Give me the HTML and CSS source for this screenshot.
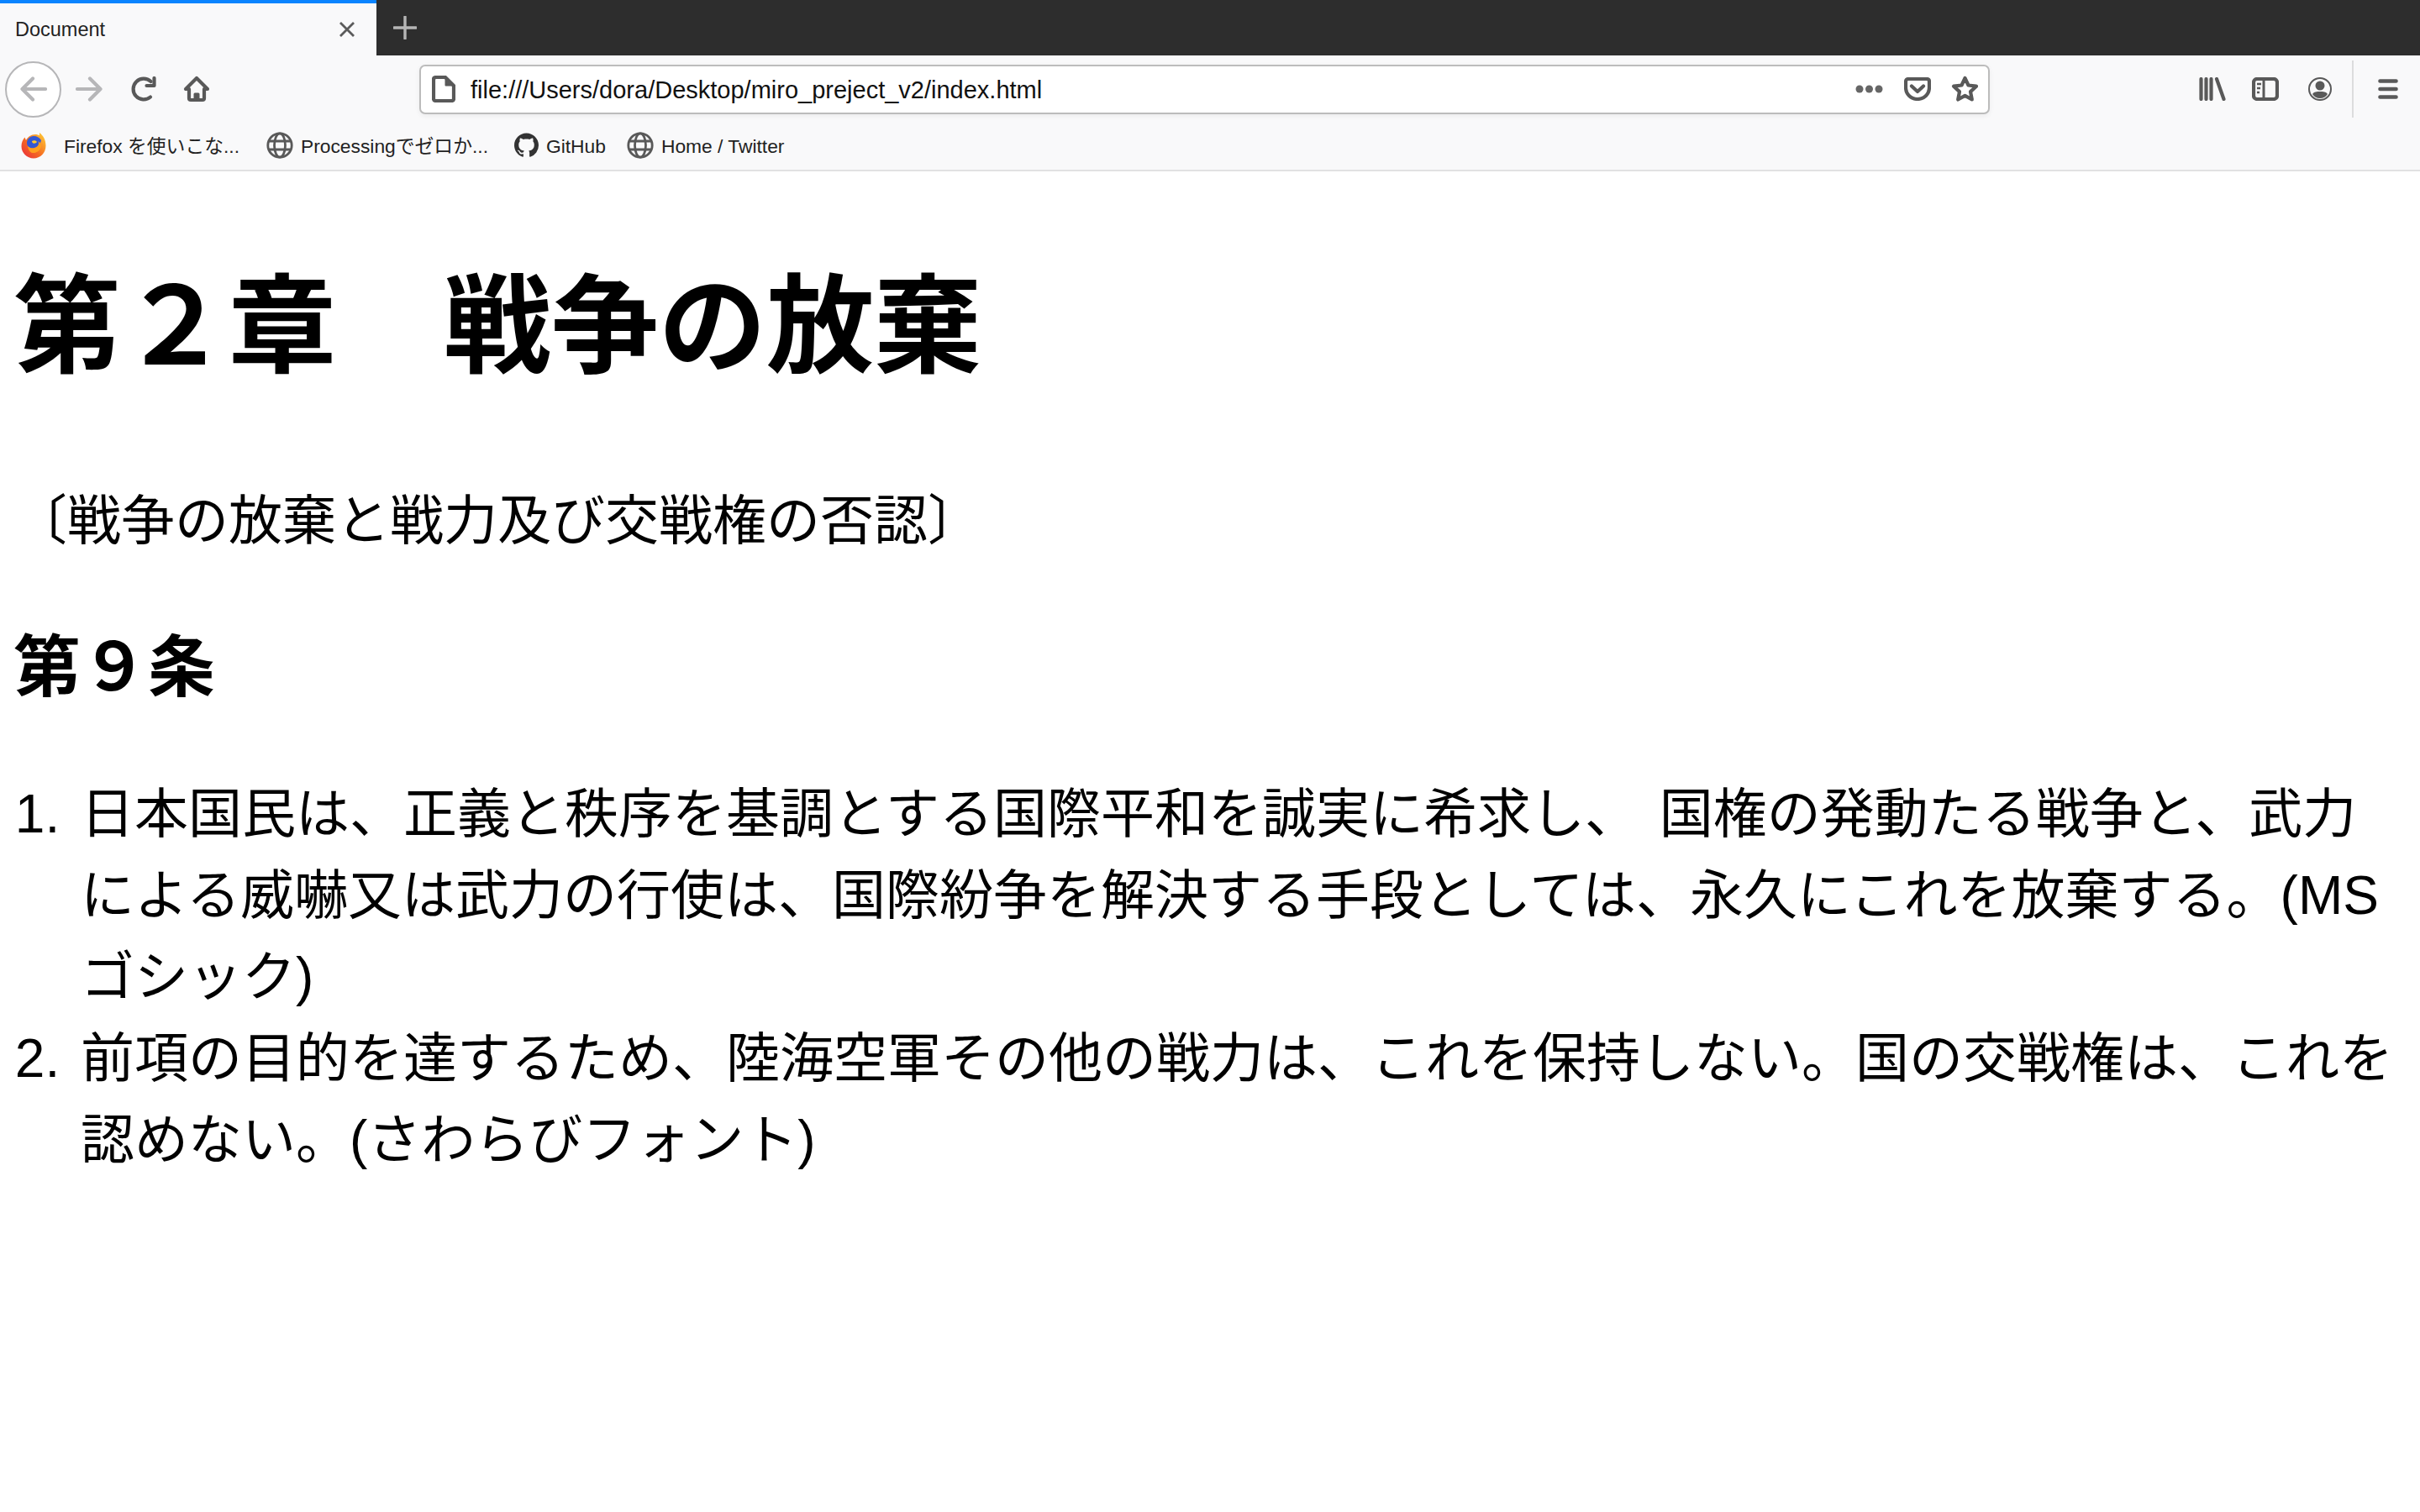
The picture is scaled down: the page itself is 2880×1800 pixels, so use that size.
FILE: index.html
```html
<!DOCTYPE html>
<html lang="ja">

<head>
    <meta charset="UTF-8">
    <title>Document</title>
    <link rel="stylesheet" href="styles.css">
</head>

<body>
<div class="tab-bar">
    <div class="tab">
        <span class="tab-title">Document</span>
        <svg class="tab-close" viewBox="0 0 20 20"><path d="M2 2l16 16M18 2L2 18"/></svg>
    </div>
    <svg class="new-tab" viewBox="0 0 28 28"><path d="M14 1v26M1 14h26"/></svg>
</div>

<div class="nav-bar">
    <div class="back-button">
        <svg class="icon-light" viewBox="0 0 32 32"><path d="M30 16H3M15 3.500L2.500 16 15 28.500"/></svg>
    </div>
    <svg class="forward-button icon-light" viewBox="0 0 32 32"><path d="M2 16h27M17 3.500L29.500 16 17 28.500"/></svg>
    <svg class="reload-button icon" viewBox="0 0 30 30"><path d="M23.500 6A12.400 12.400 0 1 0 23 24.500"/><path d="M27.500 2v9h-9"/></svg>
    <svg class="home-button icon" viewBox="0 0 32 32"><path d="M16 3L3 16h4v11c0 1.200.8 2 2 2h14c1.200 0 2-.8 2-2V16h4z"/><path class="door" d="M14 29v-7h4v7"/></svg>

    <div class="url-bar">
        <svg class="file-icon icon" viewBox="0 0 28 32"><path d="M5 2h11l10 10v15.500c0 1.500-1 2.500-2.500 2.500h-19C3 30 2 29 2 27.500v-23C2 3 3 2 5 2z"/><path class="icon-fill" d="M16 2v10h10z"/></svg>
        <span class="url-text">file:///Users/dora/Desktop/miro_preject_v2/index.html</span>
        <svg class="more-icon" viewBox="0 0 33 12"><circle cx="5" cy="6" r="4.500"/><circle cx="16.500" cy="6" r="4.500"/><circle cx="28" cy="6" r="4.500"/></svg>
        <svg class="pocket-icon icon" viewBox="0 0 32 28"><path d="M5 2h22c1.800 0 3 1.200 3 3v7c0 8-6 14-14 14S2 20 2 12V5c0-1.800 1.200-3 3-3z"/><path d="M9 10.500l7 6.500 7-6.500"/></svg>
        <svg class="star-icon icon" viewBox="0 0 33 32"><path d="M16.500 3l4 8.500 9.500 1.200-7 6.400 1.800 9.400-8.300-4.600-8.300 4.600L10 19.100l-7-6.400 9.500-1.200z"/></svg>
    </div>

    <svg class="library-icon icon" viewBox="0 0 32 28"><path d="M2.500 2v24M8.500 2v24M14.500 2v24M21 2l8.500 24"/></svg>
    <svg class="sidebar-icon icon" viewBox="0 0 32 28"><rect x="2" y="2" width="28" height="24" rx="4"/><path class="mid" d="M14 2v24"/><path class="thin" d="M6 8h5M6 13h4M6 18h3"/></svg>
    <svg class="profile-icon" viewBox="0 0 28 28"><circle class="ring" cx="14" cy="14" r="13"/><circle cx="14" cy="10" r="5.500"/><path d="M5 20c2-3 5-3 9-3s7 0 9 3c-2 3.500-5 5-9 5s-7-1.500-9-5z"/></svg>
    <div class="toolbar-separator"></div>
    <svg class="menu-icon" viewBox="0 0 24 24"><path d="M2.500 2.500h19M2.500 12h19M2.500 21.500h19"/></svg>
</div>

<div class="bookmarks-bar">
    <svg class="bookmark-icon firefox-icon" viewBox="0 0 30 32">
        <defs>
            <linearGradient id="fox-body" x1="0" y1="1" x2="1" y2="0">
                <stop offset="0" stop-color="#e8263f"/>
                <stop offset="0.45" stop-color="#f56b22"/>
                <stop offset="1" stop-color="#ffd538"/>
            </linearGradient>
        </defs>
        <path fill="url(#fox-body)" d="M22 1c4 3 7.500 8 7.500 15.500C29.500 25 23 31.500 15 31.500S.5 25 .5 17C.5 13 2 9 4.500 6.500L6 10c2-4 6-7 11-7 2 0 4 .5 5 1.500z"/>
        <path fill="#3458d4" d="M15 5c4 0 7.500 2 9 5-1 5-5 9-10 10-4 0-7-3-7-7s3.500-8 8-8z"/>
        <path fill="#ff9f1e" d="M8 17c3 3 8 3 11 .5 2-1.500 2.500-4 1.500-6.500 3 2 4 5 3 8-1.500 4-6 6.500-10 6-3-.5-5-4-5.500-8z"/>
        <path fill="#ffc92f" d="M13 11c2-1.500 5-1 6 1-1 1.500-3 2-4.500 1.500-1-.3-1.500-1.500-1.500-2.500z"/>
    </svg>
    <span class="bookmark-text firefox-text">Firefox を使いこな...</span>
    <svg class="bookmark-icon globe-icon" viewBox="0 0 32 32"><circle cx="16" cy="16" r="14.200"/><ellipse cx="16" cy="16" rx="6.500" ry="14.200"/><path d="M2.500 11h27M2.500 21h27"/></svg>
    <span class="bookmark-text">Processingでゼロか...</span>
    <svg class="bookmark-icon github-icon" viewBox="0 0 16 16"><path d="M8 0C3.580 0 0 3.580 0 8c0 3.540 2.290 6.530 5.470 7.590.4.070.55-.17.55-.38 0-.19-.01-.82-.01-1.490-2.010.37-2.530-.49-2.690-.94-.09-.23-.48-.94-.82-1.130-.28-.15-.68-.52-.01-.53.630-.01 1.080.58 1.230.82.720 1.210 1.870.87 2.330.66.070-.52.280-.87.510-1.070-1.780-.2-3.640-.89-3.640-3.950 0-.87.310-1.590.820-2.150-.08-.2-.36-1.020.08-2.120 0 0 .67-.21 2.200.82.640-.18 1.320-.27 2-.27s1.360.09 2 .27c1.530-1.040 2.200-.82 2.200-.82.440 1.100.16 1.920.08 2.120.51.560.82 1.270.82 2.150 0 3.070-1.870 3.750-3.650 3.950.29.250.54.730.54 1.480 0 1.070-.01 1.930-.01 2.200 0 .21.150.46.550.38A8.010 8.010 0 0 0 16 8c0-4.420-3.580-8-8-8z"/></svg>
    <span class="bookmark-text">GitHub</span>
    <svg class="bookmark-icon globe-icon" viewBox="0 0 32 32"><circle cx="16" cy="16" r="14.200"/><ellipse cx="16" cy="16" rx="6.500" ry="14.200"/><path d="M2.500 11h27M2.500 21h27"/></svg>
    <span class="bookmark-text">Home / Twitter</span>
</div>

<div class="content">
    <h1>第２章　戦争の放棄</h1>
    <p>〔戦争の放棄と戦力及び交戦権の否認〕</p>
    <h3>第９条</h3>
    <ol>
        <li>日本国民は、正義と秩序を基調とする国際平和を誠実に希求し、 国権の発動たる戦争と、武力による威嚇又は武力の行使は、国際紛争を解決する手段としては、永久にこれを放棄する。(MSゴシック)</li>
        <li>前項の目的を達するため、陸海空軍その他の戦力は、これを保持しない。国の交戦権は、これを認めない。(さわらびフォント)</li>
    </ol>
</div>
</body>

</html>
```
FILE: styles.css
```css
html, body {
    margin: 0;
    padding: 0;
    background-color: #fff;
}

body {
    font-family: "Liberation Sans", "Noto Sans CJK JP", sans-serif;
    color: #000;
}

svg {
    display: block;
    flex: none;
}

.tab-bar {
    display: flex;
    align-items: center;
    height: 66px;
    background-color: #2d2d2d;
}

.tab {
    display: flex;
    align-items: center;
    justify-content: space-between;
    box-sizing: border-box;
    width: 448px;
    height: 66px;
    padding: 0 25px 0 18px;
    background-color: #f9f9fa;
    border-top: 4px solid #0a84ff;
}

.tab-title {
    font-size: 23.500px;
    color: #222;
}

.tab-close {
    width: 20px;
    height: 20px;
    fill: none;
    stroke: #5b5b5b;
    stroke-width: 2.8;
}

.new-tab {
    width: 28px;
    height: 28px;
    margin-left: 20px;
    fill: none;
    stroke: #b5b5b5;
    stroke-width: 3.4;
    stroke-linecap: round;
}

.nav-bar {
    display: flex;
    align-items: center;
    box-sizing: border-box;
    height: 80px;
    padding-left: 6px;
    background-color: #f9f9fa;
}

.icon,
.icon-light {
    fill: none;
    stroke-width: 4.2;
    stroke-linecap: round;
    stroke-linejoin: round;
}

.icon {
    stroke: #595959;
}

.icon-light {
    stroke: #b6b6b8;
}

.icon-fill {
    fill: #595959;
    stroke-width: 1;
}

.door {
    fill: #595959;
    stroke-width: 3;
}

.back-button {
    display: flex;
    align-items: center;
    justify-content: center;
    box-sizing: border-box;
    width: 67px;
    height: 67px;
    background-color: #fff;
    border: 2px solid #b6b6b8;
    border-radius: 50%;
}

.back-button svg {
    width: 32px;
    height: 32px;
}

.forward-button {
    width: 32px;
    height: 32px;
    margin-left: 17px;
}

.reload-button {
    width: 30px;
    height: 30px;
    margin-left: 34px;
}

.home-button {
    width: 32px;
    height: 32px;
    margin-left: 32px;
}

.url-bar {
    display: flex;
    align-items: center;
    box-sizing: border-box;
    width: 1869px;
    height: 59px;
    margin-left: 249px;
    padding: 0 11px 0 13px;
    background-color: #fff;
    border: 2px solid #bcbcbc;
    border-radius: 7px;
    box-shadow: 0 2px 6px rgba(0, 0, 0, 0.06);
}

.file-icon {
    width: 28px;
    height: 32px;
}

.url-text {
    flex: 1;
    margin-left: 18px;
    padding-top: 2px;
    font-size: 29px;
    color: #111;
}

.more-icon {
    width: 33px;
    height: 12px;
    fill: #666;
}

.pocket-icon {
    width: 32px;
    height: 28px;
    margin-left: 25px;
}

.star-icon {
    width: 33px;
    height: 32px;
    margin-left: 24px;
}

.library-icon {
    width: 32px;
    height: 28px;
    margin-left: 249px;
}

.sidebar-icon {
    width: 32px;
    height: 28px;
    margin-left: 31px;
}

.mid {
    stroke-width: 3;
}

.thin {
    stroke-width: 2.4;
    stroke-linecap: butt;
}

.profile-icon {
    width: 28px;
    height: 28px;
    margin-left: 35px;
    fill: #595959;
}

.ring {
    fill: none;
    stroke: #595959;
    stroke-width: 2;
}

.toolbar-separator {
    width: 2px;
    height: 68px;
    margin-left: 24px;
    background-color: #dcdcdd;
}

.menu-icon {
    width: 24px;
    height: 24px;
    margin-left: 29px;
    fill: none;
    stroke: #595959;
    stroke-width: 4.6;
    stroke-linecap: round;
}

.bookmarks-bar {
    display: flex;
    align-items: center;
    box-sizing: border-box;
    height: 58px;
    padding: 0 0 2px 25px;
    background-color: #f9f9fa;
    border-bottom: 2px solid #e1e1e2;
}

.bookmark-icon {
    height: 32px;
}

.bookmark-text {
    margin-left: 9px;
    padding-top: 2px;
    font-size: 22.800px;
    line-height: 32px;
    color: #222;
}

.firefox-icon {
    width: 30px;
}

.firefox-text {
    margin-left: 21px;
}

.globe-icon {
    width: 32px;
    margin-left: 32px;
    fill: none;
    stroke: #595959;
    stroke-width: 2.8;
}

.bookmark-text + .globe-icon:last-of-type {
    margin-left: 25px;
}

.github-icon {
    width: 29px;
    margin-left: 31px;
    fill: #333;
}

.content {
    padding: 0 16px;
}

h1 {
    margin: 90px 0 86px;
    font-size: 128px;
    line-height: 192px;
    font-weight: bold;
}

p {
    margin: 0 0 71px;
    font-size: 64px;
    line-height: 96px;
}

h3 {
    margin: 0 0 70px;
    font-size: 80px;
    line-height: 112px;
    font-weight: bold;
}

ol {
    margin: 0;
    padding-left: 80px;
    font-size: 64px;
    line-height: 97px;
    word-spacing: 7px;
}
```
